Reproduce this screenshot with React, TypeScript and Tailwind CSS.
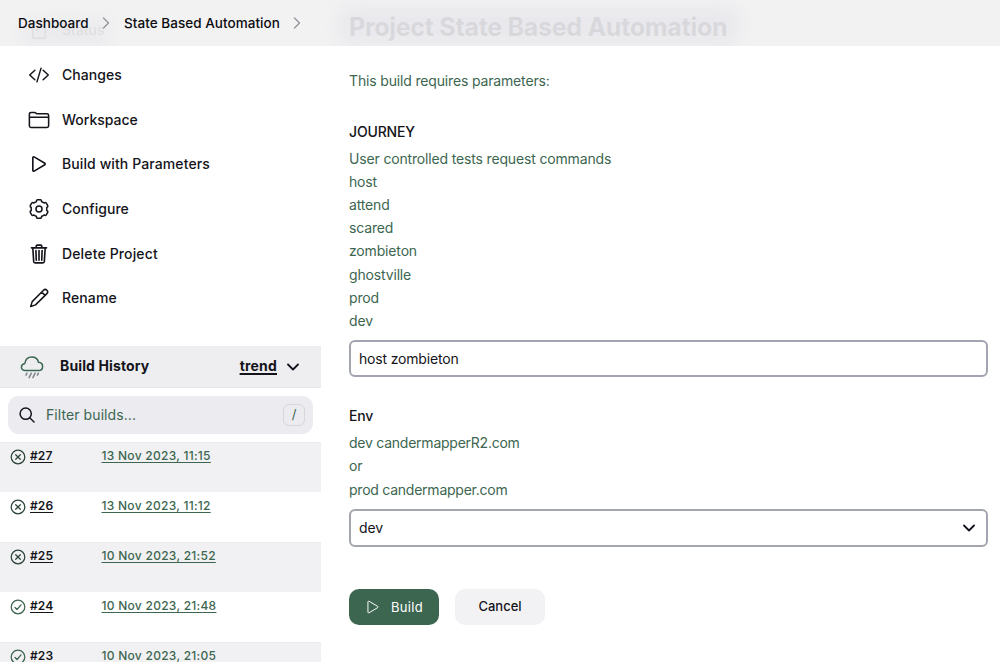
import type { ReactNode } from "react";

const icon = (children: ReactNode, stroke = 34) => (
  <svg
    viewBox="0 0 512 512"
    className="h-[22px] w-[22px] shrink-0"
    fill="none"
    stroke="currentColor"
    strokeWidth={stroke}
    strokeLinecap="round"
    strokeLinejoin="round"
  >
    {children}
  </svg>
);

const playPath =
  "M112 111v290c0 17.44 17 28.52 31 20.16l247.9-148.37c12.12-7.25 12.12-26.33 0-33.58L143 90.84c-14-8.36-31 2.72-31 20.16z";

// Outline of a cog with six broad teeth, centred on (11, 11).
const polar = (deg: number, r: number) => {
  const a = (deg * Math.PI) / 180;
  return `${(11 + r * Math.sin(a)).toFixed(2)} ${(11 - r * Math.cos(a)).toFixed(2)}`;
};
const gearPath =
  [0, 60, 120, 180, 240, 300]
    .map(
      (t) =>
        `${t === 0 ? "M" : "L"}${polar(t - 19, 7.9)}Q${polar(t - 17, 9.3)} ${polar(t - 10, 9.4)}L${polar(t + 10, 9.4)}Q${polar(t + 17, 9.3)} ${polar(t + 19, 7.9)}Q${polar(t + 24, 7.5)} ${polar(t + 30, 7.9)}Q${polar(t + 36, 7.5)} ${polar(t + 41, 7.9)}`
    )
    .join("") + "Z";

const menu: { label: string; tracking: string; art: ReactNode }[] = [
  {
    label: "Changes",
    tracking: "tracking-[0.03px]",
    art: icon(<path d="M160 368 40 256l120-112M352 368l120-112-120-112M304 96l-96 320" />),
  },
  {
    label: "Workspace",
    tracking: "tracking-[0px]",
    art: icon(
      <path d="M440 432H72a40 40 0 0 1-40-40V120a40 40 0 0 1 40-40h75.89a40 40 0 0 1 22.19 6.72l27.84 18.56a40 40 0 0 0 22.19 6.72H440a40 40 0 0 1 40 40v240a40 40 0 0 1-40 40zM32 192h448" />,
      36
    ),
  },
  { label: "Build with Parameters", tracking: "tracking-[0.1px]", art: icon(<path d={playPath} />, 38) },
  {
    label: "Configure",
    tracking: "tracking-[0.04px]",
    art: (
      <svg viewBox="0 0 22 22" className="h-[22px] w-[22px] shrink-0" fill="none" stroke="currentColor" strokeWidth="1.5" strokeLinejoin="round">
        <path d={gearPath} />
        <circle cx="11" cy="11" r="3" />
      </svg>
    ),
  },
  {
    label: "Delete Project",
    tracking: "tracking-[0.14px]",
    art: icon(
      <path d="m112 112 20 320c.95 18.49 14.4 32 32 32h184c17.67 0 30.87-13.51 32-32l20-320M80 112h352M192 112V72a24 24 0 0 1 24-24h80a24 24 0 0 1 24 24v40M256 176v224M184 176l8 224M328 176l-8 224" />,
      38
    ),
  },
  {
    label: "Rename",
    tracking: "tracking-[0.1px]",
    art: (
      <svg viewBox="0 0 22 22" className="h-[22px] w-[22px] shrink-0" fill="none" stroke="currentColor" strokeWidth="1.5" strokeLinecap="round" strokeLinejoin="round">
        <path d="M2.700 19.500 4.200 14.600 15.500 3.200a2.350 2.350 0 0 1 3.400 3.400L7.500 17.900zM13.700 5l3.400 3.400" />
      </svg>
    ),
  },
];

const builds = [
  { id: "#27", date: "13 Nov 2023, 11:15", ok: false },
  { id: "#26", date: "13 Nov 2023, 11:12", ok: false },
  { id: "#25", date: "10 Nov 2023, 21:52", ok: false },
  { id: "#24", date: "10 Nov 2023, 21:48", ok: true },
  { id: "#23", date: "10 Nov 2023, 21:05", ok: true },
];

const Chevron = ({ className }: { className: string }) => (
  <svg viewBox="0 0 8 12" className={className} fill="none" stroke="#95959f" strokeWidth="1.4" strokeLinecap="round" strokeLinejoin="round">
    <path d="m1.5 1 5 5-5 5" />
  </svg>
);

const Down = ({ className }: { className: string }) => (
  <svg viewBox="0 0 12 8" className={className} fill="none" stroke="#14141f" strokeWidth="1.8" strokeLinecap="round" strokeLinejoin="round">
    <path d="m1 1.5 5 5 5-5" />
  </svg>
);

function Header() {
  return (
    <header className="absolute inset-x-0 top-0 z-10 flex h-[46px] items-center overflow-hidden bg-[#f0f0f2]/89 pl-[18px] text-[13.5px] font-medium text-[#0c0c10]">
      <div className="absolute top-[6px] left-[338px] -z-10 h-[40px] w-[402px] rounded-2xl bg-[#dad9e2]/35 blur-[8px]" />
      <div className="absolute top-[20px] left-[20px] -z-10 h-[26px] w-[90px] rounded-2xl bg-[#dad9e2]/30 blur-[8px]" />
      <span className="w-[71px] tracking-[0.03px]">Dashboard</span>
      <Chevron className="ml-[13px] h-3 w-2" />
      <span className="ml-[14px] w-[156px] tracking-[0.04px] whitespace-nowrap">State Based Automation</span>
      <Chevron className="ml-[13px] h-3 w-2" />
    </header>
  );
}

function Sidebar() {
  return (
    <aside className="w-[321px] shrink-0">
      <nav className="flex h-[346px] flex-col pt-[8px] pl-7 text-sm font-medium">
        <div className="flex h-[44.65px] shrink-0 items-center gap-3 opacity-70">
          {icon(<path d="M112 64h288v384H112zM176 176h160M176 256h80" />)}
          <span>Status</span>
        </div>
        {menu.map((m) => (
          <a key={m.label} className="flex h-[44.65px] shrink-0 items-center gap-3">
            {m.art}
            <span className={m.tracking}>{m.label}</span>
          </a>
        ))}
      </nav>
      <div className="flex h-[42px] items-center border-b border-[#e6e6ea] bg-[#eeeef1] pr-[22px] pl-[20px] text-sm font-bold">
        <svg viewBox="0 0 24 24" className="h-6 w-6" fill="none" stroke="#3d6650" strokeWidth="1.5" strokeLinecap="round" strokeLinejoin="round">
          <path d="M5 15.500C2.800 15.500 1.400 14 1.400 12.200c0-1.900 1.300-3.200 3.400-3.700C5.400 4.600 8 2 11.800 2c3.500 0 6 2 6.700 5.300 2.500.2 4.100 1.900 4.100 4.100 0 2.400-1.700 4.100-4.200 4.100z" />
          <path d="m7 18.200-1 2M11.300 18.200l-2.200 4.500M15.100 18.200l-2.200 4.500M18.400 18.200l-1 2" stroke="#7b858c" />
        </svg>
        <span className="ml-4 pb-[2px] tracking-[0.12px]">Build History</span>
        <a className="ml-auto pb-[2px] tracking-[0.2px] underline decoration-[1.5px] underline-offset-2">trend</a>
        <Down className="ml-[10px] h-2 w-3" />
      </div>
      <div className="px-2 pt-2">
        <div className="flex h-[38px] items-center rounded-[11px] bg-[#ebebf0] pr-2 pl-[11px] text-[#3d6650]">
          <svg viewBox="0 0 16 16" className="h-4 w-4" fill="none" stroke="#14141f" strokeWidth="1.5" strokeLinecap="round">
            <circle cx="6.700" cy="6.700" r="5.600" />
            <path d="m11 11 4 4" />
          </svg>
          <span className="ml-[11px] text-sm tracking-[0.08px]">Filter builds...</span>
          <span className="ml-auto flex h-[22px] w-[22px] items-center justify-center rounded-[6px] border border-[#d6d6dd] text-[13px]">/</span>
        </div>
      </div>
      <div className="mt-2">
        {builds.map((b) => (
          <div key={b.id} className="flex h-[50px] items-start border-t border-[#ececef] pt-[6px] pl-[10px] text-[12px] leading-[14px] odd:bg-[#f1f1f3] even:border-transparent">
            <svg viewBox="0 0 16 16" className="h-4 w-4" fill="none" stroke={b.ok ? "#3d6650" : "#2b4538"} strokeWidth="1.25" strokeLinecap="round" strokeLinejoin="round">
              <circle cx="8" cy="8" r="6.800" />
              <path d={b.ok ? "m5 8.500 2 2 4-4.700" : "m5.700 5.700 4.600 4.600m0-4.600-4.600 4.600"} />
            </svg>
            <a className="ml-1 w-[71.500px] font-semibold tracking-[0.1px]">
              <span className="underline underline-offset-2">{b.id}</span>
            </a>
            <a className="font-medium tracking-[0.27px] text-[#3d6650] underline underline-offset-2">{b.date}</a>
          </div>
        ))}
      </div>
    </aside>
  );
}

const journey = ["User controlled tests request commands", "host", "attend", "scared", "zombieton", "ghostville", "prod", "dev"];
const env = ["dev candermapperR2.com", "or", "prod candermapper.com"];

function Main() {
  return (
    <main className="ml-7 w-[639px] text-sm tracking-[-0.16px]">
      <h1 className="h-[69px] pt-[10px] text-[25px] leading-[34px] font-bold tracking-[-0.28px] whitespace-nowrap">Project State Based Automation</h1>
      <p className="h-[52px] leading-[24px] text-[#3d6650]">This build requires parameters:</p>
      <h2 className="h-[25.600px] leading-[22px] font-medium">JOURNEY</h2>
      <div className="h-[193.400px] leading-[23.200px] text-[#3d6650]">
        {journey.map((t) => (
          <div key={t}>{t}</div>
        ))}
      </div>
      <div className="flex h-[37px] items-center rounded-[6px] border-2 border-[#a2a4af] px-2 pt-px tracking-[-0.18px]">host zombieton</div>
      <h2 className="mt-[28px] h-[26px] leading-[22px] font-medium">Env</h2>
      <div className="h-[78px] leading-[23.300px] tracking-[-0.24px] text-[#3d6650]">
        {env.map((t) => (
          <div key={t}>{t}</div>
        ))}
      </div>
      <div className="flex h-[38px] items-center justify-between rounded-[6px] border-2 border-[#a2a4af] pr-[11px] pl-2">
        <span>dev</span>
        <Down className="h-[8px] w-[12px]" />
      </div>
      <div className="mt-[42px] flex gap-4 text-[13px] font-medium tracking-normal">
        <button className="flex h-[36px] w-[90px] items-center rounded-[10px] bg-[#3d6650] pl-[15px] text-white">
          <svg viewBox="0 0 512 512" className="h-[18px] w-[18px]" fill="none" stroke="currentColor" strokeWidth="28" strokeLinejoin="round">
            <path d={playPath} />
          </svg>
          <span className="ml-[9px] font-normal tracking-[0.3px]">Build</span>
        </button>
        <button className="h-[36px] w-[90px] rounded-[10px] bg-[#f2f2f4] pb-[2px]">Cancel</button>
      </div>
    </main>
  );
}

export default function App() {
  return (
    <div className="relative flex h-[662px] w-[1000px] overflow-hidden bg-white font-[Inter,sans-serif] text-[#14141a]">
      <Header />
      <Sidebar />
      <Main />
    </div>
  );
}
